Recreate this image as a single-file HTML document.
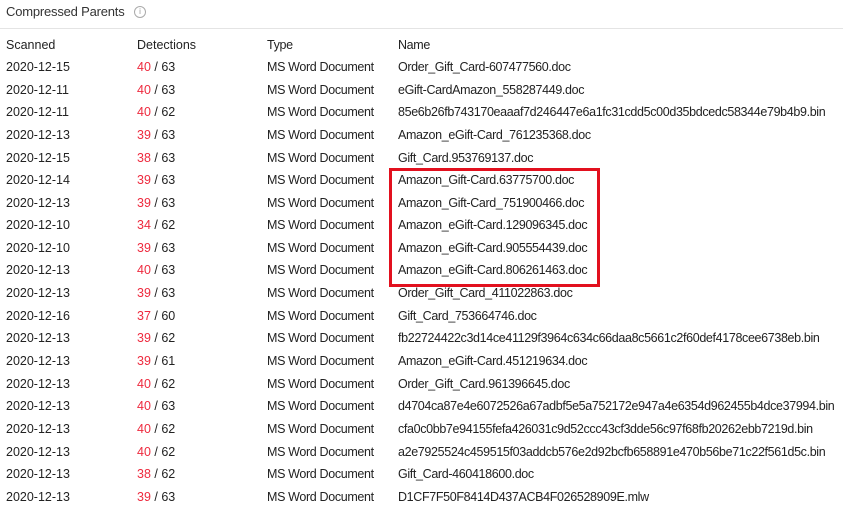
<!DOCTYPE html>
<html><head><meta charset="utf-8"><style>
html,body{margin:0;padding:0;background:#fff;width:843px;height:516px;overflow:hidden}
body{font-family:"Liberation Sans",sans-serif;color:#222;font-size:12.5px;position:relative}
.t{position:absolute;left:6px;top:4px;font-size:13px;color:#333;letter-spacing:-0.2px}
.i{position:absolute;left:134px;top:6px;width:10px;height:10px;border:1px solid #aaa;border-radius:50%;font-size:8px;color:#999;text-align:center;line-height:10px}
.hr{position:absolute;left:0;top:28px;width:843px;height:1px;background:#e4e4e4}
.r{position:absolute;left:0;width:843px;height:20px;line-height:20px;white-space:nowrap}
.r span{position:absolute}
.c1{left:6px}.c2{left:137px}.c3{left:267px;letter-spacing:-0.35px}.c4{left:398px;letter-spacing:-0.35px}
.red{color:#ee2a3e;font-weight:normal}
.box{position:absolute;left:389px;top:168px;width:205px;height:113px;border:3px solid #e2101e}
</style></head><body>
<div class="t">Compressed Parents</div><div class="i">i</div>
<div class="hr"></div>
<div class="r" style="top:35px"><span class="c1">Scanned</span><span class="c2">Detections</span><span class="c3">Type</span><span class="c4">Name</span></div>
<div class="r" style="top:57px"><span class="c1">2020-12-15</span><span class="c2"><b class="red">40</b> / 63</span><span class="c3">MS Word Document</span><span class="c4">Order_Gift_Card-607477560.doc</span></div>
<div class="r" style="top:80px"><span class="c1">2020-12-11</span><span class="c2"><b class="red">40</b> / 63</span><span class="c3">MS Word Document</span><span class="c4">eGift-CardAmazon_558287449.doc</span></div>
<div class="r" style="top:102px"><span class="c1">2020-12-11</span><span class="c2"><b class="red">40</b> / 62</span><span class="c3">MS Word Document</span><span class="c4">85e6b26fb743170eaaaf7d246447e6a1fc31cdd5c00d35bdcedc58344e79b4b9.bin</span></div>
<div class="r" style="top:125px"><span class="c1">2020-12-13</span><span class="c2"><b class="red">39</b> / 63</span><span class="c3">MS Word Document</span><span class="c4">Amazon_eGift-Card_761235368.doc</span></div>
<div class="r" style="top:148px"><span class="c1">2020-12-15</span><span class="c2"><b class="red">38</b> / 63</span><span class="c3">MS Word Document</span><span class="c4">Gift_Card.953769137.doc</span></div>
<div class="r" style="top:170px"><span class="c1">2020-12-14</span><span class="c2"><b class="red">39</b> / 63</span><span class="c3">MS Word Document</span><span class="c4">Amazon_Gift-Card.63775700.doc</span></div>
<div class="r" style="top:193px"><span class="c1">2020-12-13</span><span class="c2"><b class="red">39</b> / 63</span><span class="c3">MS Word Document</span><span class="c4">Amazon_Gift-Card_751900466.doc</span></div>
<div class="r" style="top:215px"><span class="c1">2020-12-10</span><span class="c2"><b class="red">34</b> / 62</span><span class="c3">MS Word Document</span><span class="c4">Amazon_eGift-Card.129096345.doc</span></div>
<div class="r" style="top:238px"><span class="c1">2020-12-10</span><span class="c2"><b class="red">39</b> / 63</span><span class="c3">MS Word Document</span><span class="c4">Amazon_eGift-Card.905554439.doc</span></div>
<div class="r" style="top:260px"><span class="c1">2020-12-13</span><span class="c2"><b class="red">40</b> / 63</span><span class="c3">MS Word Document</span><span class="c4">Amazon_eGift-Card.806261463.doc</span></div>
<div class="r" style="top:283px"><span class="c1">2020-12-13</span><span class="c2"><b class="red">39</b> / 63</span><span class="c3">MS Word Document</span><span class="c4">Order_Gift_Card_411022863.doc</span></div>
<div class="r" style="top:306px"><span class="c1">2020-12-16</span><span class="c2"><b class="red">37</b> / 60</span><span class="c3">MS Word Document</span><span class="c4">Gift_Card_753664746.doc</span></div>
<div class="r" style="top:328px"><span class="c1">2020-12-13</span><span class="c2"><b class="red">39</b> / 62</span><span class="c3">MS Word Document</span><span class="c4">fb22724422c3d14ce41129f3964c634c66daa8c5661c2f60def4178cee6738eb.bin</span></div>
<div class="r" style="top:351px"><span class="c1">2020-12-13</span><span class="c2"><b class="red">39</b> / 61</span><span class="c3">MS Word Document</span><span class="c4">Amazon_eGift-Card.451219634.doc</span></div>
<div class="r" style="top:374px"><span class="c1">2020-12-13</span><span class="c2"><b class="red">40</b> / 62</span><span class="c3">MS Word Document</span><span class="c4">Order_Gift_Card.961396645.doc</span></div>
<div class="r" style="top:396px"><span class="c1">2020-12-13</span><span class="c2"><b class="red">40</b> / 63</span><span class="c3">MS Word Document</span><span class="c4">d4704ca87e4e6072526a67adbf5e5a752172e947a4e6354d962455b4dce37994.bin</span></div>
<div class="r" style="top:419px"><span class="c1">2020-12-13</span><span class="c2"><b class="red">40</b> / 62</span><span class="c3">MS Word Document</span><span class="c4">cfa0c0bb7e94155fefa426031c9d52ccc43cf3dde56c97f68fb20262ebb7219d.bin</span></div>
<div class="r" style="top:442px"><span class="c1">2020-12-13</span><span class="c2"><b class="red">40</b> / 62</span><span class="c3">MS Word Document</span><span class="c4">a2e7925524c459515f03addcb576e2d92bcfb658891e470b56be71c22f561d5c.bin</span></div>
<div class="r" style="top:464px"><span class="c1">2020-12-13</span><span class="c2"><b class="red">38</b> / 62</span><span class="c3">MS Word Document</span><span class="c4">Gift_Card-460418600.doc</span></div>
<div class="r" style="top:487px"><span class="c1">2020-12-13</span><span class="c2"><b class="red">39</b> / 63</span><span class="c3">MS Word Document</span><span class="c4">D1CF7F50F8414D437ACB4F026528909E.mlw</span></div>
<div class="box"></div>
</body></html>
